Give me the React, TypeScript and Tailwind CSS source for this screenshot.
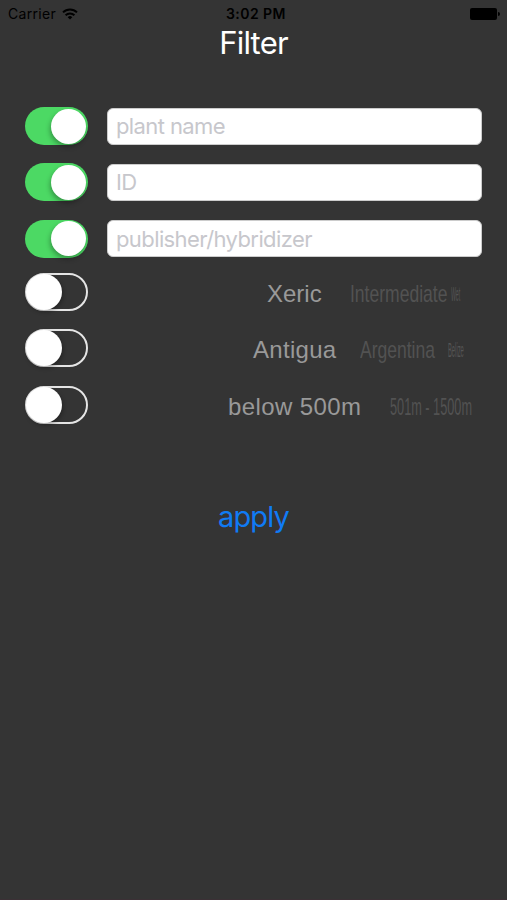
import clsx from 'clsx';

interface Option {
  label: string;
  className: string;
}

interface PickerProps {
  selected: Option;
  next: Option;
  last?: Option;
}

const fields = ['plant name', 'ID', 'publisher/hybridizer'];

const pickers: PickerProps[] = [
  {
    selected: { label: 'Xeric', className: 'ml-[179px] w-[56px]' },
    next: { label: 'Intermediate', className: 'ml-[27px] w-[98px] scale-x-[0.73]' },
    last: { label: 'Wet', className: 'ml-[3px] w-[10px] scale-x-[0.26]' },
  },
  {
    selected: { label: 'Antigua', className: 'ml-[165px] w-[84px] tracking-[0.3px]' },
    next: { label: 'Argentina', className: 'ml-[23px] w-[76px] scale-x-[0.73]' },
    last: { label: 'Belize', className: 'ml-[12px] w-[17px] scale-x-[0.29]' },
  },
  {
    selected: { label: 'below 500m', className: 'ml-[140px] w-[134px] tracking-[0.4px]' },
    next: { label: '501m - 1500m', className: 'ml-[28px] w-[82px] scale-x-[0.53]' },
  },
];

function Switch({ on }: { on: boolean }) {
  return (
    <button
      role="switch"
      aria-checked={on}
      className={clsx(
        'flex h-[38px] w-[63px] shrink-0 items-center rounded-full',
        on ? 'justify-end bg-[#4cd964] pr-[2px]' : 'justify-start border-2 border-[#e5e5e5]'
      )}
    >
      <span
        className={clsx(
          'shrink-0 rounded-full bg-white',
          on
            ? 'size-[35px] shadow-[-1px_3px_5px_rgba(0,0,0,0.3)]'
            : '-ml-[1px] size-[36px] shadow-[1px_2px_4px_rgba(0,0,0,0.3)]'
        )}
      />
    </button>
  );
}

function Picker({ selected, next, last }: PickerProps) {
  return (
    <div className="flex h-[38px] items-center pt-[4px] font-['Liberation_Sans',Arial,sans-serif] text-[24px] leading-[38px] whitespace-nowrap">
      <span className={clsx('shrink-0 text-[#999999]', selected.className)}>{selected.label}</span>
      <span className={clsx('shrink-0 origin-left text-[#525252]', next.className)}>{next.label}</span>
      {last && (
        <span className={clsx('shrink-0 origin-left text-[20px] text-[#555555]', last.className)}>{last.label}</span>
      )}
    </div>
  );
}

export default function App() {
  return (
    <div className="flex h-[900px] w-[507px] flex-col overflow-hidden border-b border-[#3b3035] bg-[#343434] font-['Inter','Liberation_Sans',sans-serif]">
      {/* Status bar */}
      <header className="grid h-[27px] grid-cols-3 items-center pr-[7px] pl-[8px] text-[14px] text-black">
        <div className="flex items-center gap-[6px]">
          <span className="tracking-[0.3px]">Carrier</span>
          <svg width="16" height="12" viewBox="0 0 16 12" fill="none" stroke="currentColor" strokeWidth="2">
            <path d="M1 4.4a10 10 0 0 1 14 0M3.6 7.2a6.3 6.3 0 0 1 8.8 0" />
            <path d="M8 11.5 5.7 9.2a3.3 3.3 0 0 1 4.6 0Z" fill="currentColor" stroke="none" />
          </svg>
        </div>
        <span className="pl-[4px] text-center font-semibold tracking-[0.45px] whitespace-nowrap">3:02 PM</span>
        <div className="flex items-center justify-end gap-px">
          <span className="h-[12px] w-[27px] rounded-[2px] bg-black" />
          <span className="h-[4px] w-[2px] rounded-r-full bg-black" />
        </div>
      </header>

      <h1 className="h-[34px] text-center text-[31px] leading-[32px] tracking-[-0.8px] text-white">Filter</h1>

      <main className="mt-[46px] px-[25px]">
        <div className="flex flex-col gap-[18.25px]">
          {fields.map((field) => (
            <div key={field} className="flex h-[38px] items-center gap-[19px]">
              <Switch on />
              <input
                className="h-[37px] min-w-0 flex-1 rounded-[6px] border border-[#cccccc] bg-white px-[8px] text-[22px] tracking-[-0.6px] text-black placeholder:text-[#c7c7cc]"
                placeholder={field}
              />
            </div>
          ))}
        </div>

        <div className="mt-[15.5px] flex flex-col gap-[18.25px]">
          {pickers.map((picker) => (
            <div key={picker.selected.label} className="flex h-[38px] items-center">
              <Switch on={false} />
              <Picker {...picker} />
            </div>
          ))}
        </div>
      </main>

      <button className="mx-auto mt-[73px] h-[40px] text-[29px] leading-[36px] tracking-[-0.9px] text-[#107bf5]">apply</button>
    </div>
  );
}
